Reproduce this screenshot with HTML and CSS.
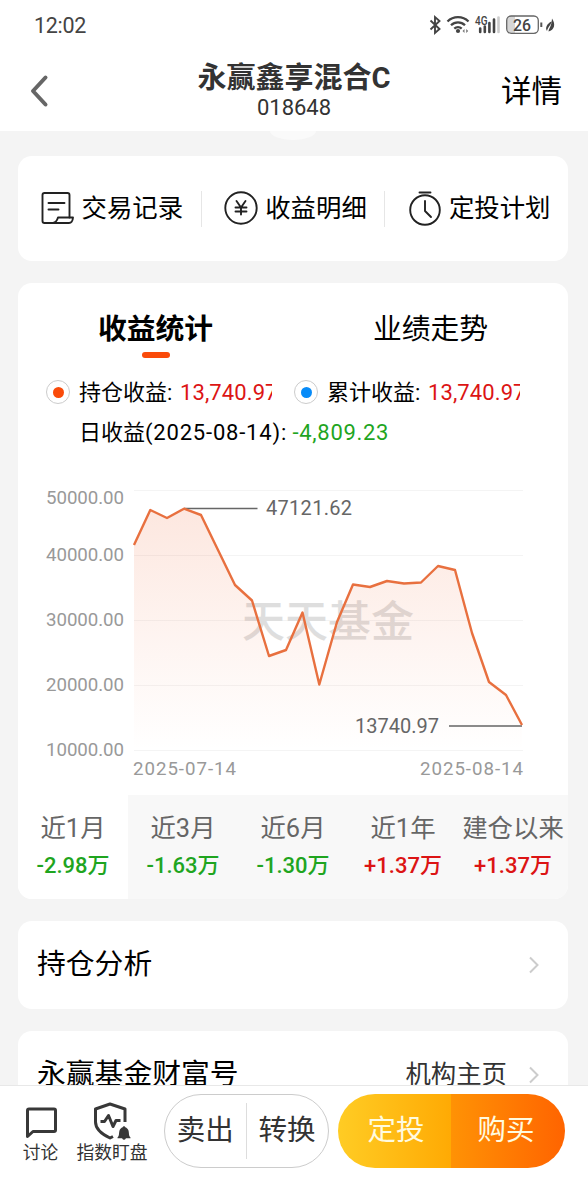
FILE: index.html
```html
<!DOCTYPE html>
<html lang="zh-CN">
<head>
  <meta charset="UTF-8" />
  <meta name="viewport" content="width=device-width, initial-scale=1.0" />
  <title>永赢鑫享混合C</title>
  <link rel="stylesheet" href="styles.css">
</head>
<body>
  <header>
    <div class="status-bar">
      <span class="time">12:02</span>
      <svg class="status-icons" width="128" height="24" viewBox="428 13 128 24">
        <path d="M430.500 20.500l9 8.500-4.500 4v-16l4.500 4-9 8.500" fill="none" stroke="#444" stroke-width="1.900" />
        <g fill="none" stroke="#444" stroke-width="2.300">
          <path d="M447.500 21.500a15 15 0 0 1 21 0" />
          <path d="M451 25.300a10 10 0 0 1 14 0" />
          <path d="M454.300 28.700a5.500 5.500 0 0 1 7.400 0" />
        </g>
        <circle cx="458" cy="31" r="2.100" fill="#444" />
        <path d="M464.500 29v4l-2-2zM466.200 29v4l2-2z" fill="#777" />
        <text class="net" x="475" y="24.500" textLength="12.500" lengthAdjust="spacingAndGlyphs">4G</text>
        <path d="M480.200 28.500v3.500M484.800 26.500v5.500M489.400 23v9M494 19.500v12.500" stroke="#444" stroke-width="2.600" stroke-linecap="round" />
        <path d="M498.500 17.500v14.500" stroke="#ccc" stroke-width="2.600" stroke-linecap="round" />
        <path d="M511 16h4v17h-4a4 4 0 0 1-4-4v-9a4 4 0 0 1 4-4z" fill="#d6d6d6" />
        <rect x="506.700" y="16" width="31.600" height="17.300" rx="4.500" fill="none" stroke="#666" stroke-width="1.300" />
        <text class="battery" x="513" y="30.500" textLength="18" lengthAdjust="spacingAndGlyphs">26</text>
        <path d="M541.300 22.500v4.500" stroke="#555" stroke-width="2" />
        <path d="M547 31c-2.200-3 0-7.500 4.500-9.500-.5 4-3.500 5-4.500 9.500zM548.500 31.500c.5-3.500 3-5 3.500-13 4 6 2.300 11.500-3.500 13z" fill="#444" />
      </svg>
    </div>
    <div class="nav">
      <svg class="back" width="20" height="34" viewBox="0 0 20 34"><path d="M16.500 3.500L4 17l12.500 13.500" /></svg>
      <div class="fund">
        <h1>永赢鑫享混合C</h1>
        <div class="code">018648</div>
      </div>
      <a class="detail">详情</a>
    </div>
  </header>

  <main>
    <div class="bump"></div>

    <section class="card shortcuts">
      <a>
        <svg width="36" height="36" viewBox="0 0 36 36">
          <path d="M15 33H4.500q-2 0-2-2V5q0-2 2-2h23q2 0 2 2v22.500" />
          <path d="M18 27.500h15q-.5 5.500-4 5.500H13q3.500-.5 5-5.500zM8.500 13h16M8.500 19.500h10" />
        </svg>
        <span>交易记录</span>
      </a>
      <a>
        <svg width="36" height="36" viewBox="0 0 36 36">
          <circle cx="18" cy="18" r="15.700" />
          <path d="M13.500 11l4.500 6.500 4.500-6.500M12.500 17.500h11M12.500 21.500h11M18 17.500v7" />
        </svg>
        <span>收益明细</span>
      </a>
      <a>
        <svg width="36" height="36" viewBox="0 0 36 36">
          <circle cx="18" cy="20" r="14.800" />
          <path d="M12.500 2.500h11M18 11v10l6 6" />
        </svg>
        <span>定投计划</span>
      </a>
    </section>

    <section class="card stats">
      <div class="tabs">
        <div class="tab active">收益统计</div>
        <div class="tab">业绩走势</div>
      </div>

      <div class="legend">
        <div class="legend-item">
          <span class="radio orange"></span>
          <span class="name">持仓收益:</span>
          <span class="amount up">13,740.97</span>
        </div>
        <div class="legend-item">
          <span class="radio blue"></span>
          <span class="name">累计收益:</span>
          <span class="amount up">13,740.97</span>
        </div>
      </div>
      <div class="daily">日收益<span class="date">(2025-08-14):</span> <span class="change down">-4,809.23</span></div>

      <svg class="chart" width="550" height="335" viewBox="18 460 550 335">
        <defs>
          <linearGradient id="area" x1="0" y1="0" x2="0" y2="1">
            <stop offset="0" stop-color="#f0602c" stop-opacity="0.15" />
            <stop offset="0.550" stop-color="#f0602c" stop-opacity="0.065" />
            <stop offset="1" stop-color="#f0602c" stop-opacity="0" />
          </linearGradient>
        </defs>
        <path class="grid" d="M134 490.500H523M134 555.500H523M134 620.500H523M134 685.500H523M134 750.500H523" />
        <text class="watermark" x="242" y="636.500" textLength="172">天天基金</text>
        <path fill="url(#area)" d="M134 545L150.300 510 167 518 184 508.700 201 515 218 550 235 585 252 600.500 269 656 286 650 302.500 612.500 319.300 684.500 337 622 353 584.500 370 587 387 581 404 583.500 421 582.500 438 566 455 570 472 633 489 682 506 695 522 725V750H134z" />
        <path class="leader" d="M184 508.500H257.500M449 726H522" />
        <path class="line" d="M134 545L150.300 510 167 518 184 508.700 201 515 218 550 235 585 252 600.500 269 656 286 650 302.500 612.500 319.300 684.500 337 622 353 584.500 370 587 387 581 404 583.500 421 582.500 438 566 455 570 472 633 489 682 506 695 522 725" />
        <g class="axis">
          <text x="46" y="503.500" textLength="78">50000.00</text>
          <text x="46" y="560.500" textLength="78">40000.00</text>
          <text x="46" y="626" textLength="78">30000.00</text>
          <text x="46" y="691" textLength="78">20000.00</text>
          <text x="46" y="756" textLength="78">10000.00</text>
          <text x="133" y="775" textLength="103">2025-07-14</text>
          <text x="420" y="775" textLength="103">2025-08-14</text>
        </g>
        <g class="mark">
          <text x="266" y="515" textLength="86">47121.62</text>
          <text x="355" y="732.500" textLength="84">13740.97</text>
        </g>
      </svg>

      <div class="periods">
        <div class="period active"><span>近1月</span><b class="down">-2.98万</b></div>
        <div class="period"><span>近3月</span><b class="down">-1.63万</b></div>
        <div class="period"><span>近6月</span><b class="down">-1.30万</b></div>
        <div class="period"><span>近1年</span><b class="up">+1.37万</b></div>
        <div class="period"><span>建仓以来</span><b class="up">+1.37万</b></div>
      </div>
    </section>

    <section class="card row">
      <h2>持仓分析</h2>
      <svg class="arrow" width="12" height="18" viewBox="0 0 12 18"><path d="M2 1.500L9.500 9 2 16.500" /></svg>
    </section>

    <section class="card row">
      <h2>永赢基金财富号</h2>
      <span class="more">机构主页</span>
      <svg class="arrow" width="12" height="18" viewBox="0 0 12 18"><path d="M2 1.500L9.500 9 2 16.500" /></svg>
    </section>
  </main>

  <footer>
    <a class="tool discuss">
      <svg width="36" height="36" viewBox="0 0 36 36"><path d="M4.500 31.500V5.500q0-1.500 1.500-1.500h25q1.500 0 1.500 1.500V25q0 1.500-1.500 1.500H10z" /></svg>
      讨论
    </a>
    <a class="tool watch">
      <svg width="40" height="40" viewBox="0 0 40 40">
        <path d="M33 20V7L18 2 3.500 7v13c0 7 7 12.500 14.500 16l3-1.500" />
        <path d="M8.500 19.500h4l4-6 4.500 11 3-6h4.500" />
        <path class="bell" d="M25.500 35.500c2-1.500 1.200-5 2.200-7.500.7-1.500 2-2.500 3.100-2.800.2-1.300 2.200-1.300 2.400 0 1.100.3 2.400 1.300 3.100 2.800 1 2.500.2 6 2.200 7.500v.8h-4.500q-2 3-4 0h-4.500z" />
      </svg>
      指数盯盘
    </a>
    <div class="pill outline">
      <a>卖出</a>
      <a>转换</a>
    </div>
    <div class="pill solid">
      <a class="invest">定投</a>
      <a class="buy">购买</a>
    </div>
  </footer>
</body>
</html>
```

FILE: styles.css
```css
:root {
  --page-bg: #f4f4f4;
  --up: #dc1414;
  --down: #1fa51f;
  --orange: #fa4b0a;
  --blue: #078bf8;
}

* {
  box-sizing: border-box;
}

body {
  font-family: Roboto, "Noto Sans CJK SC", sans-serif;
  margin: 0;
  height: 1200px;
  display: flex;
  flex-direction: column;
  overflow: hidden;
  background: var(--page-bg);
  color: #000;
}

h1, h2 {
  margin: 0;
}

header {
  height: 131px;
  flex: none;
  background: #fff;
}

.status-bar {
  height: 50px;
  padding: 0 32px 0 34px;
  display: flex;
  justify-content: space-between;
  align-items: center;
}

.time {
  font-size: 21.5px;
  color: #444;
  letter-spacing: -0.3px;
}

.net {
  font-size: 12px;
  font-weight: 500;
  fill: #444;
}

.battery {
  font-size: 17px;
  font-weight: 500;
  fill: #444;
}

.nav {
  height: 81px;
  padding: 0 26px 0 29px;
  display: grid;
  grid-template-columns: 80px 1fr 83px;
  align-items: center;
}

.back path {
  fill: none;
  stroke: #666;
  stroke-width: 4;
  stroke-linecap: round;
  stroke-linejoin: round;
}

.fund {
  text-align: center;
  color: #333;
}

.fund h1 {
  font-size: 29px;
  line-height: 34px;
  white-space: nowrap;
}

.code {
  font-size: 22px;
  line-height: 25px;
}

.detail {
  font-size: 30.5px;
  line-height: 40px;
  padding-top: 3px;
  text-align: right;
}

main {
  flex: 1;
  min-height: 0;
  overflow: hidden;
  padding: 0 20px 0 18px;
}

.bump {
  width: 46px;
  height: 9px;
  margin: 0 auto 16px;
  border-radius: 0 0 23px 23px / 0 0 9px 9px;
  background: #fafafa;
}

.card {
  background: #fff;
  border-radius: 14px;
  margin-bottom: 22px;
  overflow: hidden;
}

.shortcuts {
  height: 105px;
  display: flex;
  align-items: center;
}

.shortcuts a {
  flex: 1;
  height: 36px;
  padding-left: 4px;
  display: flex;
  align-items: center;
  justify-content: center;
  gap: 6px;
  font-size: 25.4px;
  white-space: nowrap;
}

.shortcuts span {
  padding-bottom: 5px;
}

.shortcuts a + a {
  border-left: 1px solid #e6e6e6;
}

.shortcuts svg {
  margin-top: -2px;
  fill: none;
  stroke: #222;
  stroke-width: 1.9;
  stroke-linejoin: round;
  stroke-linecap: round;
}

.stats {
  height: 615.5px;
}

.tabs {
  display: flex;
  height: 92px;
}

.tab {
  flex: 1;
  padding-top: 25px;
  font-size: 28.8px;
  line-height: 42px;
  display: flex;
  flex-direction: column;
  align-items: center;
}

.tab.active {
  font-weight: bold;
}

.tab.active::after {
  content: "";
  width: 28px;
  height: 6px;
  margin-top: 2px;
  border-radius: 3px;
  background: var(--orange);
}

.legend {
  display: flex;
  height: 34px;
  padding-left: 27.5px;
}

.legend-item {
  width: 248px;
  display: flex;
  align-items: center;
  font-size: 22px;
  line-height: 36px;
  white-space: nowrap;
}

.radio {
  width: 24px;
  height: 24px;
  margin-right: 9.5px;
  border: 1px solid #ccc;
  border-radius: 50%;
  padding: 5.5px;
  background-clip: content-box;
}

.radio.orange { background-color: var(--orange); }
.radio.blue   { background-color: var(--blue); }

.name {
  width: 101px;
  padding-top: 1px;
}

/* long amounts are cut at the column edge */
.amount {
  width: 92px;
  padding-top: 1px;
  overflow: hidden;
  letter-spacing: 0.1px;
}

.up   { color: var(--up); }
.down { color: var(--down); }

.daily {
  height: 51px;
  padding-left: 61px;
  font-size: 22px;
  line-height: 47px;
  white-space: nowrap;
}

.date {
  letter-spacing: 0.8px;
}

.change {
  letter-spacing: 0.7px;
}

.chart {
  display: block;
}

.grid {
  stroke: #f4f4f4;
  fill: none;
}

.watermark {
  font-size: 43px;
  font-weight: 500;
  fill: #dedede;
}

.line {
  fill: none;
  stroke: #e8703f;
  stroke-width: 2.4;
  stroke-linejoin: round;
}

.leader {
  stroke: #666;
  stroke-width: 1.7;
}

.axis {
  font-size: 18.7px;
  fill: #999;
}

.mark {
  font-size: 20px;
  fill: #666;
}

.periods {
  display: flex;
  height: 103.5px;
}

.period {
  flex: 1;
  padding-top: 15px;
  display: flex;
  flex-direction: column;
  align-items: center;
  background: #f8f8f8;
  white-space: nowrap;
}

.period.active {
  background: #fff;
}

.period span {
  font-size: 25.4px;
  line-height: 36px;
  color: #666;
}

.period b {
  font-size: 22px;
  font-weight: 500;
  line-height: 39px;
}

.row {
  height: 88px;
  padding: 0 28px 0 19px;
  display: flex;
  align-items: center;
}

.row h2 {
  flex: 1;
  padding-bottom: 1px;
  font-size: 28.8px;
  line-height: 40px;
  font-weight: normal;
}

.more {
  padding-bottom: 5px;
  font-size: 25.4px;
  color: #333;
  margin-right: 21px;
}

.arrow path {
  fill: none;
  stroke: #ccc;
  stroke-width: 2;
}

footer {
  height: 115px;
  flex: none;
  padding: 8px 0 0 22px;
  display: flex;
  align-items: flex-start;
  background: #fff;
  border-top: 1px solid #e8e8e8;
  color: #333;
}

.tool {
  display: flex;
  flex-direction: column;
  align-items: center;
  font-size: 17.8px;
  line-height: 21px;
  white-space: nowrap;
}

.tool svg {
  fill: none;
  stroke: #383838;
  stroke-width: 3;
  stroke-linejoin: round;
}

.discuss {
  width: 37px;
  padding-top: 11px;
}

.discuss svg {
  margin-bottom: 1px;
}

.watch {
  width: 72px;
  margin: 0 16px 0 17px;
  padding-top: 8px;
}

.watch .bell {
  fill: #383838;
  stroke: none;
}

.pill {
  height: 74px;
  display: flex;
  align-items: center;
  border-radius: 37px;
  overflow: hidden;
  font-size: 28.5px;
}

.pill a {
  flex: 1;
  text-align: center;
}

.outline {
  width: 164.5px;
  margin-right: 9.5px;
  border: 1px solid #ccc;
}

.outline a {
  line-height: 56px;
}

.outline a + a {
  border-left: 1px solid #ddd;
}

.solid {
  width: 227px;
  color: #fffbe0;
}

.solid a {
  line-height: 74px;
}

.invest {
  padding-left: 3px;
  background: linear-gradient(90deg, #ffcc24, #ffaa04);
}

.buy {
  padding-right: 4px;
  background: linear-gradient(90deg, #ff9205, #ff6400);
}
```
